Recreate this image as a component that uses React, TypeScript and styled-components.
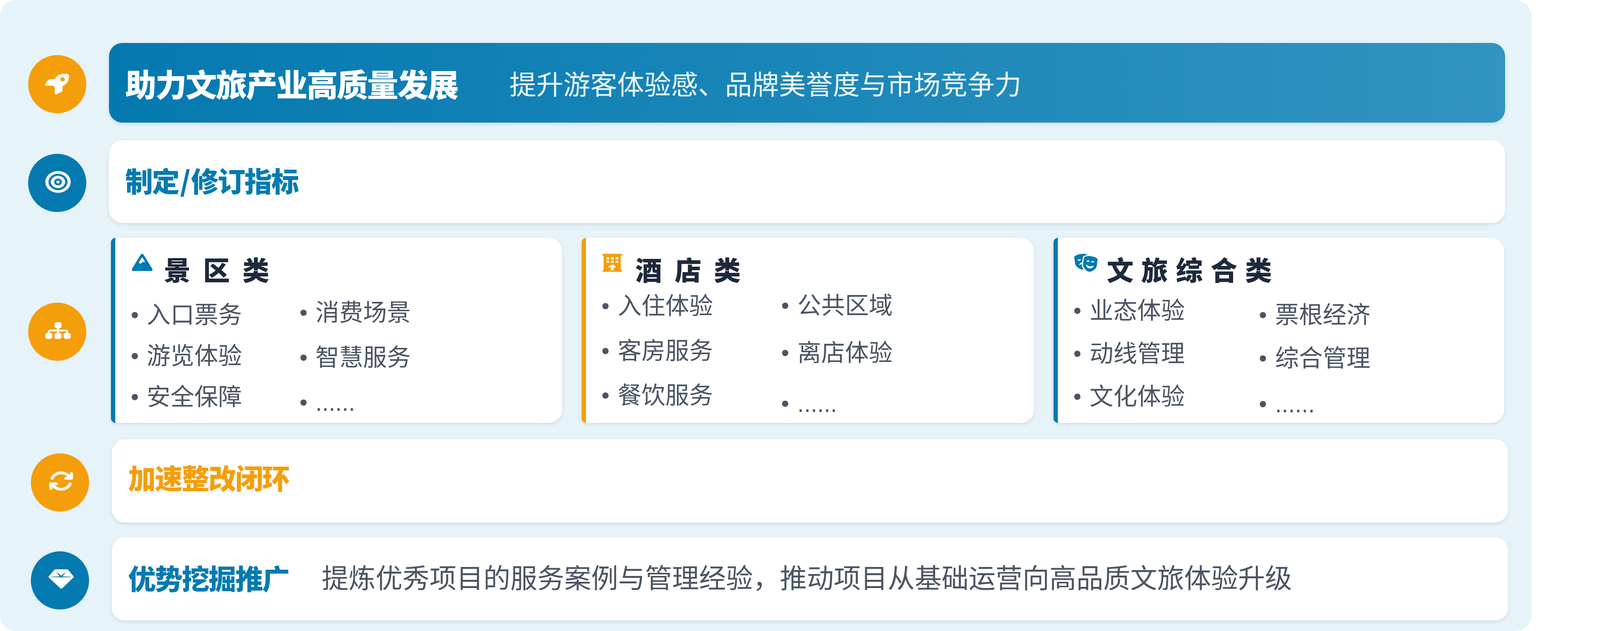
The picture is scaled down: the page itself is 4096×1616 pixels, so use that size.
import * as React from 'react';
import styled, { createGlobalStyle } from 'styled-components';
import {
  FaBullseye,
  FaSitemap,
  FaArrowsRotate,
  FaMasksTheater,
} from 'react-icons/fa6';

const BLUE = '#047ab0';
const ORANGE = '#f59e0b';

const GlobalStyle = createGlobalStyle`
  html, body {
    margin: 0;
    background: #ffffff;
  }
  body {
    font-family: "Liberation Sans", "Noto Sans CJK SC", sans-serif;
  }
`;

const Panel = styled.div`
  box-sizing: border-box;
  width: 3921px;
  height: 1616px;
  padding-top: 110px;
  background: #e6f3f8;
  border-radius: 42px;
  overflow: hidden;
`;

const Row = styled.div<{ $top: number; $shift?: number }>`
  display: flex;
  align-items: center;
  gap: 58px;
  margin-top: ${(p) => p.$top}px;
  padding-left: ${(p) => 71.5 + (p.$shift || 0)}px;
  padding-right: ${(p) => 68 - (p.$shift || 0)}px;
`;

const Circle = styled.div<{ $color: string; $w: number; $h: number; $centered?: boolean }>`
  flex: none;
  box-sizing: border-box;
  display: flex;
  align-items: center;
  justify-content: center;
  width: 149px;
  height: 149px;
  margin-top: 7px;
  padding: ${(p) => (p.$centered ? '0' : '0 0 6px 5px')};
  border-radius: 50%;
  background: ${(p) => p.$color};
  color: #ffffff;
  svg {
    width: ${(p) => p.$w}px;
    height: ${(p) => p.$h}px;
  }
`;

const Bar = styled.div<{ $height: number }>`
  flex: 1;
  box-sizing: border-box;
  display: flex;
  align-items: center;
  height: ${(p) => p.$height}px;
  padding: 0 42px;
  background: #ffffff;
  border-radius: 34px;
  box-shadow: 0 4px 10px rgba(15, 50, 70, 0.1);
`;

const Banner = styled(Bar)`
  gap: 132px;
  background: linear-gradient(90deg, #0479b0, #3194c1);
`;

const BannerTitle = styled.div`
  font-size: 80px;
  font-weight: 900;
  letter-spacing: -2.6px;
  color: #ffffff;
`;

const BannerText = styled.div`
  font-size: 69px;
  color: rgba(255, 255, 255, 0.93);
`;

const BarTitle = styled.div<{ $color: string; $lift: number }>`
  font-size: 71px;
  font-weight: 900;
  letter-spacing: -2.4px;
  color: ${(p) => p.$color};
  margin-bottom: ${(p) => p.$lift}px;
`;

const Slash = styled.span`
  font-family: "Noto Sans CJK SC", sans-serif;
  padding: 0 3px;
`;

const BarText = styled.div`
  margin: 0 0 14px 84px;
  font-size: 69px;
  color: #4b5563;
`;

const CardGrid = styled.div`
  flex: 1;
  display: grid;
  grid-template-columns: 1156fr 1158fr 1154fr;
  gap: 50px;
  margin: 0 2px 0 5px;
`;

const Card = styled.div<{ $color: string }>`
  box-sizing: border-box;
  height: 474px;
  padding: 41px 0 0 42px;
  background: #ffffff;
  border-left: 11px solid ${(p) => p.$color};
  border-radius: 12px 34px 34px 12px;
  box-shadow: 0 4px 10px rgba(15, 50, 70, 0.1);
`;

const CardHead = styled.div<{ $color: string; $w: number; $h: number; $gap: number }>`
  display: flex;
  align-items: flex-start;
  gap: ${(p) => p.$gap}px;
  height: 80px;
  color: ${(p) => p.$color};
  svg {
    flex: none;
    width: ${(p) => p.$w}px;
    height: ${(p) => p.$h}px;
  }
`;

const CardTitle = styled.div<{ $spacing: number }>`
  margin-top: 5px;
  font-size: 68.6px;
  line-height: 80px;
  font-weight: 900;
  color: #1e293b;
  letter-spacing: ${(p) => p.$spacing}px;
`;

const ItemGrid = styled.div<{ $first: number }>`
  display: grid;
  grid-template-columns: ${(p) => p.$first}px 1fr;
`;

const Item = styled.div<{ $top: number }>`
  display: flex;
  align-items: center;
  gap: 23px;
  height: 80px;
  margin-top: ${(p) => p.$top}px;
  font-size: 61px;
  line-height: 80px;
  color: #4b5563;
  &::before {
    content: "";
    flex: none;
    width: 16px;
    height: 16px;
    border-radius: 50%;
    background: #4b5563;
  }
`;

const RocketIcon = () => (
  <svg viewBox="188 205 197 170">
    <path
      fill="currentColor"
      fillRule="evenodd"
      d="M268 248 H226 Q220 248 216 253 L190 288 Q184 300 196 303 H246 Q268 304 268 326 V362 Q268 378 282 374 L322 354 Q332 349 332 340 V306 C366 292 385 262 385 226 Q385 207 368 205 H340 C310 205 284 222 268 248 Z M332 233 C322 233 313 240 313 250 C313 260 322 267 332 267 C343 267 351 260 351 250 C351 240 343 233 332 233 Z"
    />
  </svg>
);

const GemIcon = () => (
  <svg viewBox="183 985 207 160">
    <path
      fill="currentColor"
      fillRule="evenodd"
      d="M240 985 H335 Q341 985 345 990 L387 1042 Q392 1048 386 1053 L294 1142 Q288 1148 282 1142 L186 1053 Q181 1048 186 1042 L230 990 Q234 985 240 985 Z M245 1003 L275 1043 Q240 1043 206 1046 Q206 1048 206 1049 Q288 1054 367 1049 V1046 Q330 1043 298 1043 L328 1003 L288 1037 Z"
    />
  </svg>
);

const MountainIcon = () => (
  <svg viewBox="60 60 171 140">
    <path
      fill="currentColor"
      fillRule="evenodd"
      d="M133 67 Q145 53 157 67 L227 180 Q236 200 214 200 H77 Q55 200 64 180 Z M145 88 L118 130 L130 142 L150 127 L170 125 Z"
    />
  </svg>
);

const HotelIcon = () => (
  <svg viewBox="75 60 162 147">
    <path
      fill="currentColor"
      fillRule="evenodd"
      d="M81 60 H231 Q237 60 237 67 Q237 75 231 75 H225 V195 H231 Q237 195 237 201 Q237 207 231 207 H81 Q75 207 75 201 Q75 195 81 195 H85 V75 H81 Q75 75 75 67 Q75 60 81 60 Z
         M112 88 Q108 88 108 92 V102 Q108 106 112 106 H126 Q130 106 130 102 V92 Q130 88 126 88 Z
         M149 88 Q145 88 145 92 V102 Q145 106 149 106 H163 Q167 106 167 102 V92 Q167 88 163 88 Z
         M187 88 Q183 88 183 92 V102 Q183 106 187 106 H201 Q205 106 205 102 V92 Q205 88 201 88 Z
         M112 116 Q108 116 108 120 V130 Q108 134 112 134 H126 Q130 134 130 130 V120 Q130 116 126 116 Z
         M149 116 Q145 116 145 120 V130 Q145 134 149 134 H163 Q167 134 167 130 V120 Q167 116 163 116 Z
         M187 116 Q183 116 183 120 V130 Q183 134 187 134 H201 Q205 134 205 130 V120 Q205 116 201 116 Z
         M125 172 H143 V195 H167 V172 H185 C185 158 170 150 155 150 C140 150 125 158 125 172 Z"
    />
  </svg>
);

const cards = [
  {
    name: '景区类',
    color: BLUE,
    icon: <MountainIcon />,
    w: 54,
    h: 44,
    gap: 29,
    spacing: 32,
    first: 432,
    columns: [
      [['入口票务', 36.6], ['游览体验', 25.2], ['安全保障', 25.2]],
      [['消费场景', 31], ['智慧服务', 35], ['......', 35]],
    ],
  },
  {
    name: '酒店类',
    color: ORANGE,
    icon: <HotelIcon />,
    w: 51,
    h: 46,
    gap: 33,
    spacing: 32,
    first: 460,
    columns: [
      [['入住体验', 14], ['客房服务', 34.7], ['餐饮服务', 34.7]],
      [['公共区域', 13], ['离店体验', 40.5], ['......', 50.5]],
    ],
  },
  {
    name: '文旅综合类',
    color: BLUE,
    icon: <FaMasksTheater preserveAspectRatio="none" />,
    w: 60,
    h: 46,
    gap: 23,
    spacing: 20,
    first: 475,
    columns: [
      [['业态体验', 26], ['动线管理', 30], ['文化体验', 30]],
      [['票根经济', 36.6], ['综合管理', 31], ['......', 37.4]],
    ],
  },
];

const App = () => (
  <Panel>
    <GlobalStyle />
    <Row $top={0}>
      <Circle $color={ORANGE} $w={62} $h={53} $centered><RocketIcon /></Circle>
      <Banner $height={204}>
        <BannerTitle>助力文旅产业高质量发展</BannerTitle>
        <BannerText>提升游客体验感、品牌美誉度与市场竞争力</BannerText>
      </Banner>
    </Row>
    <Row $top={45}>
      <Circle $color={BLUE} $w={65} $h={56}><FaBullseye preserveAspectRatio="none" /></Circle>
      <Bar $height={212}>
        <BarTitle $color={BLUE} $lift={10}>制定<Slash>/</Slash>修订指标</BarTitle>
      </Bar>
    </Row>
    <Row $top={38}>
      <Circle $color={ORANGE} $w={65} $h={49}><FaSitemap preserveAspectRatio="none" /></Circle>
      <CardGrid>
        {cards.map((card) => (
          <Card key={card.name} $color={card.color}>
            <CardHead $color={card.color} $w={card.w} $h={card.h} $gap={card.gap}>
              {card.icon}
              <CardTitle $spacing={card.spacing}>{card.name}</CardTitle>
            </CardHead>
            <ItemGrid $first={card.first}>
              {card.columns.map((column, i) => (
                <div key={i}>
                  {column.map(([label, top]) => (
                    <Item key={label} $top={top as number}>{label}</Item>
                  ))}
                </div>
              ))}
            </ItemGrid>
          </Card>
        ))}
      </CardGrid>
    </Row>
    <Row $top={42} $shift={7.5}>
      <Circle $color={ORANGE} $w={65} $h={56}><FaArrowsRotate preserveAspectRatio="none" /></Circle>
      <Bar $height={213}>
        <BarTitle $color={ORANGE} $lift={22}>加速整改闭环</BarTitle>
      </Bar>
    </Row>
    <Row $top={38} $shift={7.5}>
      <Circle $color={BLUE} $w={65} $h={50}><GemIcon /></Circle>
      <Bar $height={213}>
        <BarTitle $color={BLUE} $lift={10}>优势挖掘推广</BarTitle>
        <BarText>提炼优秀项目的服务案例与管理经验，推动项目从基础运营向高品质文旅体验升级</BarText>
      </Bar>
    </Row>
  </Panel>
);

export default App;
